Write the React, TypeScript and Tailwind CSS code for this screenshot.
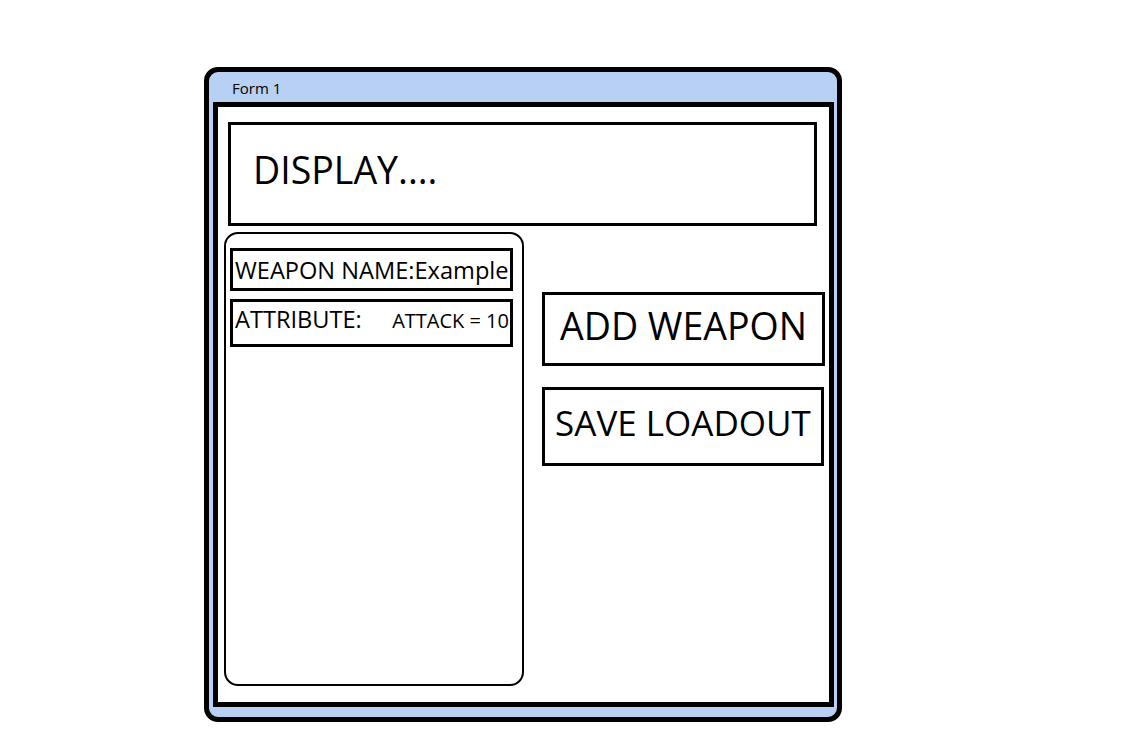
const font = { fontFamily: '"Open Sans", "Noto Sans", sans-serif' };

function Box({ children, className }: { children: React.ReactNode; className: string }) {
  return <div className={`border-[3px] border-black bg-white ${className}`}>{children}</div>;
}

export default function App() {
  return (
    <div className="w-[1124px] h-[755px] bg-white text-black" style={font}>
      <div className="pt-[67px] pl-[204px]">
        {/* window frame */}
        <div className="w-[638px] h-[655px] border-[5px] border-black rounded-[14px] bg-[#b8d0f3] pl-[4px] pr-[3px] pb-[10px] flex flex-col">
          <div className="h-[30px] flex items-center pl-[19px] pt-[2px] text-[15px] leading-none">Form 1</div>

          <div className="flex-1 border-[5px] border-black bg-white flex flex-col">
            {/* display area */}
            <Box className="ml-[10px] mt-[15px] w-[589px] h-[104px] flex items-center pl-[22px] pb-[8px]">
              <span className="text-[37.5px] leading-none">DISPLAY....</span>
            </Box>

            <div className="flex">
              {/* weapon panel */}
              <div className="ml-[6px] mt-[6px] w-[300px] h-[454px] border-2 border-black rounded-[14px] flex flex-col gap-[8px] pt-[14px] pl-[4px]">
                <Box className="w-[283px] h-[43px] flex items-center pl-[2px] pt-[3px] whitespace-nowrap overflow-hidden">
                  <span className="text-[23.6px] leading-none">WEAPON NAME:Example</span>
                </Box>
                <Box className="w-[283px] h-[48px] flex items-baseline justify-between pl-[2px] pr-[1px] pt-[6px] whitespace-nowrap">
                  <span className="text-[23.6px] leading-none">ATTRIBUTE:</span>
                  <span className="text-[20px] leading-none">ATTACK = 10</span>
                </Box>
              </div>

              {/* actions */}
              <div className="ml-[18px] mt-[66px] flex flex-col gap-[21px]">
                <Box className="w-[283px] h-[74px] flex items-center justify-center pb-[7px]">
                  <span className="text-[37.5px] leading-none whitespace-nowrap">ADD WEAPON</span>
                </Box>
                <Box className="w-[282px] h-[79px] flex items-center justify-center pb-[9px]">
                  <span className="text-[35px] leading-none whitespace-nowrap">SAVE LOADOUT</span>
                </Box>
              </div>
            </div>
          </div>
        </div>
      </div>
    </div>
  );
}
